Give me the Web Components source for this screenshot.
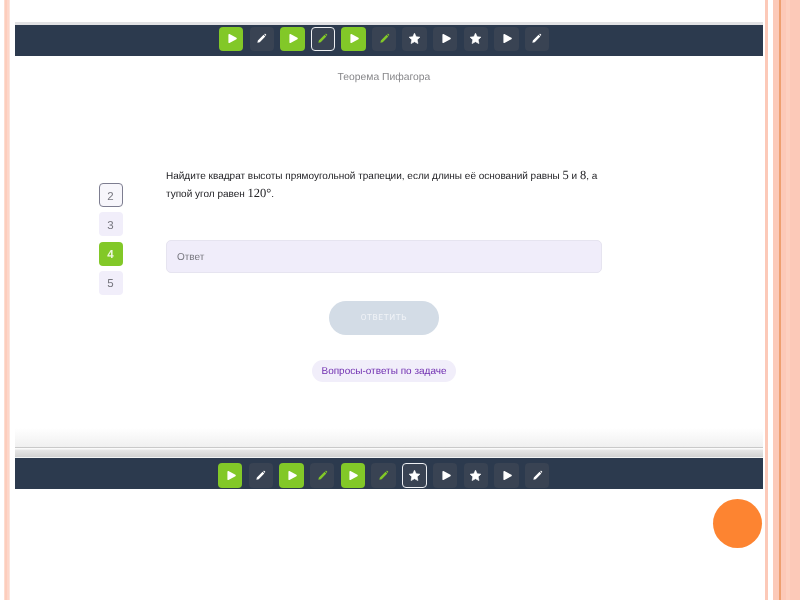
<!DOCTYPE html>
<html lang="ru">
<head>
<meta charset="utf-8">
<title>Теорема Пифагора</title>
<style>
  html, body { margin: 0; height: 100%; background: #fff; overflow: hidden; }
</style>
</head>
<body>
<slide-frame>
  <nav-bar slot="top">
    <nav-tile kind="play" done></nav-tile>
    <nav-tile kind="pen"></nav-tile>
    <nav-tile kind="play" done></nav-tile>
    <nav-tile kind="pen" green current></nav-tile>
    <nav-tile kind="play" done></nav-tile>
    <nav-tile kind="pen" green></nav-tile>
    <nav-tile kind="star"></nav-tile>
    <nav-tile kind="play"></nav-tile>
    <nav-tile kind="star"></nav-tile>
    <nav-tile kind="play"></nav-tile>
    <nav-tile kind="pen"></nav-tile>
  </nav-bar>
  <task-panel>
    <step-list slot="steps">
      <step-tile current>2</step-tile>
      <step-tile>3</step-tile>
      <step-tile done>4</step-tile>
      <step-tile>5</step-tile>
    </step-list>
    <span slot="title">Теорема Пифагора</span>
    <span slot="question">Найдите квадрат высоты прямоугольной трапеции, если длины её оснований равны <math-num>5</math-num> и <math-num>8</math-num>, а<br>тупой угол равен <math-num>120°</math-num>.</span>
  </task-panel>
  <nav-bar slot="bottom" low>
    <nav-tile kind="play" done></nav-tile>
    <nav-tile kind="pen"></nav-tile>
    <nav-tile kind="play" done></nav-tile>
    <nav-tile kind="pen" green></nav-tile>
    <nav-tile kind="play" done></nav-tile>
    <nav-tile kind="pen" green></nav-tile>
    <nav-tile kind="star" current></nav-tile>
    <nav-tile kind="play"></nav-tile>
    <nav-tile kind="star"></nav-tile>
    <nav-tile kind="play"></nav-tile>
    <nav-tile kind="pen"></nav-tile>
  </nav-bar>
</slide-frame>

<script>
// slide with the pink stripes on both sides and the orange dot
const frameTemplate = document.createElement('template');
frameTemplate.innerHTML = `
  <style>
    :host { display: block; position: relative; width: 800px; height: 600px; background: #fff; overflow: hidden; font-family: "Liberation Sans", Arial, sans-serif; text-rendering: geometricPrecision; filter: blur(.35px); }
    .row { display: flex; height: 100%; }
    .left { width: 15px; flex: none; background: linear-gradient(90deg, #fff 0 4px, #fddccf 4px 5px, #fdcdbc 5px 7px, #fdd6c9 7px 9px, #fde3da 9px 10px, #fff 10px); }
    .sheet { width: 748px; flex: none; padding-top: 22px; box-sizing: border-box; }
    .upper { margin-right: -2px; border-right: 2px solid #e4e4e6; }
    .edge { height: 3px; background: #e2e2e4; }
    .band { height: 11px; box-sizing: border-box; border-top: 1px solid #c9c9c9; border-bottom: 1px solid #f0f2f3; background: linear-gradient(#fafafa 0 1px, #e6e6e6 2px, #d2d2d2); }
    .right { flex: 1; background: linear-gradient(90deg, #fff 0 2px, #fcc9b8 2px 5px, #fff 5px 10px, #fcc9b8 10px 16px, #eea070 16px 18px, #fcc9b8 18px 23px, #fdd0c0 23px 27px, #fcc9b8 27px); }
    .dot { position: absolute; left: 713px; top: 499px; width: 49px; height: 49px; border-radius: 50%; background: #fd8431; }
  </style>
  <div class="row">
    <div class="left"></div>
    <div class="sheet">
      <div class="upper">
        <div class="edge"></div>
        <slot name="top"></slot>
        <slot></slot>
        <div class="band"></div>
      </div>
      <slot name="bottom"></slot>
    </div>
    <div class="right"></div>
  </div>
  <div class="dot"></div>
`;
class SlideFrame extends HTMLElement {
  constructor() {
    super();
    this.attachShadow({ mode: 'open' });
    this.shadowRoot.appendChild(frameTemplate.content.cloneNode(true));
  }
}
customElements.define('slide-frame', SlideFrame);

// dark strip with the tiles
const barTemplate = document.createElement('template');
barTemplate.innerHTML = `
  <style>
    :host { display: flex; align-items: center; gap: 6.2px; height: 31px; padding: 0 0 3px 204px; background: #2c3a4e; box-sizing: border-box; }
    :host([low]) { padding: 4px 0 0 203px; gap: 6.3px; }
  </style>
  <slot></slot>
`;
class NavBar extends HTMLElement {
  constructor() {
    super();
    this.attachShadow({ mode: 'open' });
    this.shadowRoot.appendChild(barTemplate.content.cloneNode(true));
  }
}
customElements.define('nav-bar', NavBar);

const ICONS = {
  play: '<path d="M9 7.2 L17.8 12 L9 16.8 Z" fill="currentColor" stroke="currentColor" stroke-width="1.8" stroke-linejoin="round"/>',
  pen: '<path d="M6.8 17.4 L7.4 14.4 L14.6 7.4 L16.8 9.6 L9.8 16.7 Z M15.4 6.6 L16 6.1 Q16.6 5.7 17.1 6.2 L17.8 6.9 Q18.2 7.4 17.8 7.9 L17.5 8.7 Z" fill="currentColor"/>',
  star: '<path d="M12 5.3 L14.1 9.7 L18.8 10.3 L15.4 13.6 L16.3 18.4 L12 16 L7.7 18.4 L8.6 13.6 L5.2 10.3 L9.9 9.7 Z" fill="currentColor" stroke="currentColor" stroke-width=".8" stroke-linejoin="round"/>'
};

class NavTile extends HTMLElement {
  constructor() {
    super();
    this.attachShadow({ mode: 'open' });
    const kind = this.getAttribute('kind');
    this.shadowRoot.innerHTML = `
      <style>
        :host { display: flex; width: 24.4px; height: 24.4px; flex: none; border-radius: 4px; background: #394353; color: #fff; box-sizing: border-box; align-items: center; justify-content: center; }
        :host([done]) { background: #82c828; }
        :host([green]) { color: #82c828; }
        :host([current]) { border: 1.3px solid #eef0f3; }
        svg { width: 19px; height: 19px; flex: none; }
      </style>
      <svg viewBox="0 0 24 24">${ICONS[kind]}</svg>
    `;
  }
}
customElements.define('nav-tile', NavTile);

// numbered tiles left of the question
const stepListTemplate = document.createElement('template');
stepListTemplate.innerHTML = `
  <style>
    :host { display: flex; flex-direction: column; gap: 5.3px; }
  </style>
  <slot></slot>
`;
class StepList extends HTMLElement {
  constructor() {
    super();
    this.attachShadow({ mode: 'open' });
    this.shadowRoot.appendChild(stepListTemplate.content.cloneNode(true));
  }
}
customElements.define('step-list', StepList);

const stepTemplate = document.createElement('template');
stepTemplate.innerHTML = `
  <style>
    :host { display: flex; width: 24px; height: 24px; border-radius: 4px; background: #f1eefa; color: #77777f; font-size: 11.5px; align-items: center; justify-content: center; box-sizing: border-box; padding: 3px 1px 0 0; }
    :host([current]) { background: #f7f6fb; border: 1.3px solid #7d7d90; }
    :host([done]) { background: #82c828; color: #eef7df; font-weight: bold; }
  </style>
  <slot></slot>
`;
class StepTile extends HTMLElement {
  constructor() {
    super();
    this.attachShadow({ mode: 'open' });
    this.shadowRoot.appendChild(stepTemplate.content.cloneNode(true));
  }
}
customElements.define('step-tile', StepTile);

// numbers inside the question are set in serif (no whitespace round the slot, it sits inline)
const numTemplate = document.createElement('template');
numTemplate.innerHTML = `<style>
    :host { display: inline; font-family: "Liberation Serif", "Times New Roman", serif; font-size: 12.5px; line-height: 1; }
  </style><slot></slot>`;
class MathNum extends HTMLElement {
  constructor() {
    super();
    this.attachShadow({ mode: 'open' });
    this.shadowRoot.appendChild(numTemplate.content.cloneNode(true));
  }
}
customElements.define('math-num', MathNum);

// the task itself
const panelTemplate = document.createElement('template');
panelTemplate.innerHTML = `
  <style>
    :host { display: flex; gap: 43px; height: 391px; padding-left: 84px; box-sizing: border-box; background: linear-gradient(#fff 0 372px, #f0f0f0 391px); }
    .steps { padding-top: 127px; }
    .col { width: 436px; display: flex; flex-direction: column; align-items: center; }
    .title { margin-top: 15px; height: 13px; line-height: 13px; font-size: 10.35px; color: #87878a; }
    .question { margin-top: 84px; width: 100%; font-size: 10px; line-height: 18px; color: #222226; }
    ::slotted([slot="question"]) { display: block; }
    .answer { margin-top: 36px; width: 100%; height: 33px; box-sizing: border-box; padding: 2px 0 0 10px; display: flex; align-items: center; background: #f0edfa; border: 1px solid #e6e4f0; border-radius: 5px; font-size: 10px; color: #77777f; }
    .send { margin-top: 28px; width: 110px; height: 34px; border-radius: 17px; background: #d3dce6; color: #f0f3f7; font: 8.3px Roboto, sans-serif; letter-spacing: .6px; display: flex; align-items: center; justify-content: center; }
    .faq { margin-top: 25px; padding: 1px 9.5px 0; height: 22px; box-sizing: border-box; border-radius: 11px; background: #f1eefa; color: #6f2db0; font-size: 10px; display: flex; align-items: center; }
  </style>
  <div class="steps"><slot name="steps"></slot></div>
  <div class="col">
    <div class="title"><slot name="title"></slot></div>
    <div class="question"><slot name="question"></slot></div>
    <div class="answer">Ответ</div>
    <div class="send">ОТВЕТИТЬ</div>
    <div class="faq">Вопросы-ответы по задаче</div>
  </div>
`;
class TaskPanel extends HTMLElement {
  constructor() {
    super();
    this.attachShadow({ mode: 'open' });
    this.shadowRoot.appendChild(panelTemplate.content.cloneNode(true));
  }
}
customElements.define('task-panel', TaskPanel);
</script>
</body>
</html>
